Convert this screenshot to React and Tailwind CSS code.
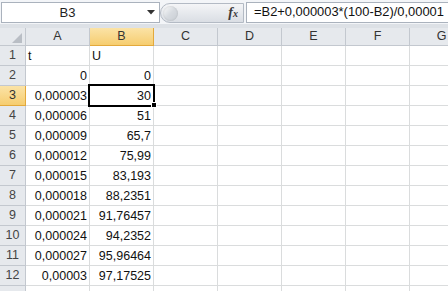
const cols = ['A', 'B', 'C', 'D', 'E', 'F', 'G'];

const rows = [
  ['t', 'U'],
  ['0', '0'],
  ['0,000003', '30'],
  ['0,000006', '51'],
  ['0,000009', '65,7'],
  ['0,000012', '75,99'],
  ['0,000015', '83,193'],
  ['0,000018', '88,2351'],
  ['0,000021', '91,76457'],
  ['0,000024', '94,2352'],
  ['0,000027', '95,96464'],
  ['0,00003', '97,17525'],
  ['', ''],
];

function FormulaBar() {
  return (
    <div className="flex h-[24px] items-start bg-[#f3f5f8] pt-[2px]">
      {/* Name box */}
      <div className="ml-[1px] flex h-[21px] w-[159px] items-center border border-[#aab2bd] bg-white">
        <span className="flex-1 pr-[14px] text-center text-[13px] leading-none text-[#222]">B3</span>
        <svg width="8" height="5" viewBox="0 0 8 5" className="mr-[4px]">
          <polygon points="0,0 8,0 4,4.5" fill="#333" />
        </svg>
      </div>

      {/* Pill with fx */}
      <div className="mt-[1px] flex h-[20px] w-[84px] items-center rounded-l-full border border-[#b3bac4] bg-gradient-to-b from-[#f4f5f7] to-[#dadee4]">
        <div className="ml-[2px] h-[15px] w-[15px] rounded-full bg-gradient-to-br from-[#fdfdfd] via-[#d7dbe0] to-[#c8cdd3] shadow-[inset_0_0_2px_rgba(0,0,0,0.15)]" />
        <span className="ml-auto mr-[5px] font-['Liberation_Serif',serif] text-[14px] font-bold italic leading-none text-[#3a3a3a]">
          f<span className="text-[10px]">x</span>
        </span>
      </div>

      {/* Formula input */}
      <div className="ml-[2px] flex h-[21px] flex-1 items-center border border-r-0 border-[#aab2bd] bg-white pl-[7px]">
        <span className="whitespace-nowrap text-[12.9px] leading-none text-[#111]">=B2+0,000003*(100-B2)/0,00001</span>
      </div>
    </div>
  );
}

function HeaderRow() {
  return (
    <div className="flex h-[18px]">
      <div className="relative h-full w-[26px] shrink-0 border-r border-b border-[#c3c8cf] bg-[#e6e9ed]">
        <svg width="10" height="10" viewBox="0 0 10 10" className="absolute right-[3px] bottom-[2px]">
          <polygon points="10,0 10,10 0,10" fill="#b9bec5" />
        </svg>
      </div>
      {cols.map((c) => (
        <div
          key={c}
          className={`flex h-full w-[64px] shrink-0 items-center justify-center border-r border-b text-[12.5px] leading-none ${
            c === 'B'
              ? 'border-[#e3a93b] bg-gradient-to-b from-[#fbe3a6] to-[#f6cd6f] text-[#333]'
              : 'border-[#c3c8cf] bg-[#e6e9ed] text-[#333]'
          }`}
        >
          {c}
        </div>
      ))}
    </div>
  );
}

export default function App() {
  return (
    <div className="relative h-[291px] w-[448px] overflow-hidden bg-white font-['Liberation_Sans',Arial,sans-serif] text-[#111]">
      <FormulaBar />
      <div className="h-[4px] bg-[#dde1e6]" />
      <HeaderRow />

      {rows.map((r, i) => {
        const n = i + 1;
        const sel = n === 3;
        // row 13 is only a sliver at the bottom edge, its number isn't visible
        const label = n < 13 ? n : '';
        return (
          <div key={n} className="flex h-[20px]">
            <div
              className={`flex h-full w-[26px] shrink-0 items-end justify-center border-r border-b pb-[2px] text-[12.5px] leading-[16px] ${
                sel
                  ? 'border-[#e3a93b] bg-gradient-to-b from-[#fbe3a6] to-[#f6cd6f] text-[#333]'
                  : 'border-[#c3c8cf] bg-[#e6e9ed] text-[#444]'
              }`}
            >
              {label}
            </div>
            {cols.map((c, j) => {
              const val = j < 2 ? r[j] : '';
              const left = n === 1;
              return (
                <div
                  key={c}
                  className={`flex h-full w-[64px] shrink-0 items-end border-r border-b border-[#dadcdd] pb-[1px] text-[12.5px] leading-[16px] ${
                    left ? 'justify-start pl-[2px]' : 'justify-end pr-[2px]'
                  }`}
                >
                  {val}
                </div>
              );
            })}
          </div>
        );
      })}

      {/* Active cell B3 */}
      <div className="absolute left-[88px] top-[84px] h-[23px] w-[67px] border-2 border-black" />
      <div className="absolute left-[151px] top-[102px] h-[6px] w-[6px] border border-white bg-black" />
    </div>
  );
}
